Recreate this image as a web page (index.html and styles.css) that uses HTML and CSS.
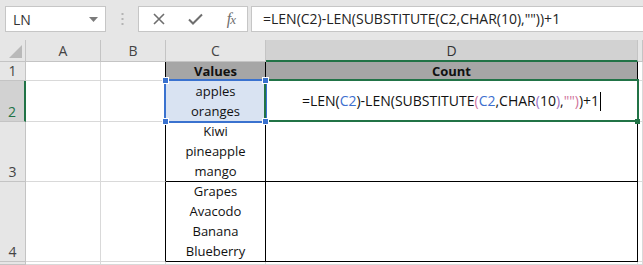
FILE: index.html
```html
<!DOCTYPE html>
<html lang="en">
<head>
    <meta charset="UTF-8">
    <title>LEN formula - count lines</title>
    <link rel="stylesheet" href="styles.css">
</head>
<body>
<div class="app">
    <div class="fbar">
        <div class="namebox">
            <span>LN</span>
            <svg class="drop" width="9" height="5" viewBox="0 0 9 5"><path d="M0 0h9L4.5 5z" fill="#7b7b7b"/></svg>
        </div>
        <svg class="grip" width="3" height="12" viewBox="0 0 3 12">
            <rect x="0.5" y="0" width="2" height="2" fill="#b4b4b4"/>
            <rect x="0.5" y="5" width="2" height="2" fill="#b4b4b4"/>
            <rect x="0.5" y="10" width="2" height="2" fill="#b4b4b4"/>
        </svg>
        <div class="btns">
            <svg width="12" height="12" viewBox="0 0 12 12"><path d="M1 1l10 10M11 1L1 11" stroke="#6e6e6e" stroke-width="1.6"/></svg>
            <svg width="15" height="12" viewBox="0 0 15 12"><path d="M1 6.5l4 4L14 1.5" stroke="#6e6e6e" stroke-width="2" fill="none"/></svg>
            <span class="fx">f<i>x</i></span>
        </div>
        <div class="formula">=LEN(C2)-LEN(SUBSTITUTE(C2,CHAR(10),""))+1</div>
    </div>

    <div class="sheet">
        <div class="corner"><svg width="13" height="13" viewBox="0 0 13 13"><path d="M13 0v13H0z" fill="#b9b9b9"/></svg></div>
        <div class="colhead">A</div>
        <div class="colhead">B</div>
        <div class="colhead">C</div>
        <div class="colhead active">D</div>
        <div class="colhead end"></div>

        <div class="rowhead">1</div>
        <div class="cell"></div>
        <div class="cell edge"></div>
        <div class="cell tbl title">Values</div>
        <div class="cell tbl title">Count</div>
        <div class="cell"></div>

        <div class="rowhead active">2</div>
        <div class="cell"></div>
        <div class="cell edge"></div>
        <div class="cell tbl val ref">
            <span>apples</span><span>oranges</span>
            <i class="h tl"></i><i class="h tr"></i><i class="h bl"></i><i class="h br"></i>
        </div>
        <div class="cell tbl edit">
            <div class="ftext">=LEN(<b class="r">C2</b>)-LEN(SUBSTITUTE<b class="p1">(</b><b class="r">C2</b>,CHAR<b class="p2">(</b>10<b class="p2">)</b>,<b class="p1">""</b><b class="p1">)</b>)+1<span class="caret"></span></div>
            <i class="gh"></i>
        </div>
        <div class="cell"></div>

        <div class="rowhead">3</div>
        <div class="cell"></div>
        <div class="cell edge"></div>
        <div class="cell tbl val"><span>Kiwi</span><span>pineapple</span><span>mango</span></div>
        <div class="cell tbl"></div>
        <div class="cell"></div>

        <div class="rowhead">4</div>
        <div class="cell"></div>
        <div class="cell edge"></div>
        <div class="cell tbl val"><span>Grapes</span><span>Avacodo</span><span>Banana</span><span>Blueberry</span></div>
        <div class="cell tbl"></div>
        <div class="cell"></div>

        <div class="rowhead"></div>
        <div class="cell"></div>
        <div class="cell"></div>
        <div class="cell"></div>
        <div class="cell"></div>
        <div class="cell"></div>
    </div>
</div>
</body>
</html>
```
FILE: styles.css
```css
:root {
    --bar-bg: #e6e6e6;
    --head-bg: #e6e6e6;
    --head-sel: #d2d2d2;
    --head-line: #c4c4c4;
    --grid: #d9d9d9;
    --green: #217346;
    --ref-blue: #3a72cf;
}

body {
    margin: 0;
    background: #ffffff;
    font-family: 'Open Sans', sans-serif;
}

.app {
    width: 643px;
    height: 265px;
    overflow: hidden;
}

/* -- formula bar -- */
.fbar {
    height: 40px;
    background: var(--bar-bg);
    display: flex;
    align-items: flex-start;
    padding-top: 6px;
    box-sizing: border-box;
}

.namebox {
    margin-left: 5px;
    width: 101px;
    height: 26px;
    box-sizing: border-box;
    background: #fff;
    border: 1px solid #c6c6c6;
    display: flex;
    align-items: center;
    justify-content: space-between;
    padding: 0 7px 0 7px;
    font-size: 14px;
    color: #333;
}

.grip {
    margin: 7px 14px 0 15px;
}

.btns {
    width: 110px;
    height: 26px;
    box-sizing: border-box;
    background: #fff;
    border: 1px solid #c6c6c6;
    display: flex;
    align-items: center;
    justify-content: space-between;
    padding: 0 12px 0 14px;
}

.fx {
    font-family: 'Liberation Serif', serif;
    font-style: italic;
    font-size: 16px;
    color: #6e6e6e;
    letter-spacing: -1px;
}

.fx i {
    font-size: 13px;
}

.formula {
    flex: 1;
    margin-left: 3px;
    height: 26px;
    box-sizing: border-box;
    background: #fff;
    border: 1px solid #c6c6c6;
    border-right: none;
    padding-left: 11px;
    font-size: 14px;
    line-height: 24px;
    color: #222;
    white-space: nowrap;
}

/* -- sheet grid -- */
.sheet {
    display: grid;
    grid-template-columns: 26px 75px 65px 100px 372px 1fr;
    grid-template-rows: 22px 19px 41px 60px 80px 1fr;
    height: 225px;
    font-size: 13px;
    color: #111;
}

.sheet > div {
    box-sizing: border-box;
    border-right: 1px solid var(--grid);
    border-bottom: 1px solid var(--grid);
}

.corner {
    background: var(--head-bg);
    display: flex;
    align-items: flex-end;
    justify-content: flex-end;
    padding: 0 3px 3px 0;
}

.sheet > .corner,
.sheet > .colhead,
.sheet > .rowhead {
    border-color: var(--head-line);
}

.colhead {
    background: var(--head-bg);
    text-align: center;
    font-size: 14px;
    line-height: 21px;
    color: #444;
}

.sheet > .colhead.active {
    background: var(--head-sel);
    border-bottom: 2px solid var(--green);
    color: #333;
}

.colhead.end {
    background: var(--head-bg);
}

.rowhead {
    background: var(--head-bg);
    font-size: 14px;
    color: #444;
    display: flex;
    align-items: flex-end;
    justify-content: center;
    line-height: 19px;
}

.sheet > .rowhead.active {
    background: var(--head-sel);
    border-right: 2px solid var(--green);
    color: var(--green);
}

.sheet > .edge {
    border-right-color: #000;
}

.sheet > .tbl {
    border-right-color: #000;
    border-bottom-color: #000;
}

.title {
    background: #a6a6a6;
    font-weight: 700;
    text-align: center;
    line-height: 18px;
}

.val {
    display: flex;
    flex-direction: column;
    justify-content: flex-end;
    align-items: center;
    line-height: 20px;
}

/* referenced cell C2 */
.ref {
    position: relative;
    background: #d9e3f2;
}

.ref::after {
    content: "";
    position: absolute;
    top: -2px;
    left: -2px;
    right: -2px;
    bottom: -2px;
    border: 2px solid var(--ref-blue);
}

.h {
    position: absolute;
    width: 5px;
    height: 5px;
    background: var(--ref-blue);
    border: 1px solid #fff;
    z-index: 2;
}

.h.tl { top: -4px; left: -4px; }
.h.tr { top: -4px; right: -4px; }
.h.bl { bottom: -4px; left: -4px; }
.h.br { bottom: -4px; right: -4px; }

/* active cell D2 in edit mode */
.edit {
    position: relative;
    display: flex;
    align-items: center;
    justify-content: center;
}

.edit::after {
    content: "";
    position: absolute;
    top: -2px;
    left: -2px;
    right: -2px;
    bottom: -1px;
    border: 2px solid var(--green);
}

.ftext {
    font-size: 14px;
    color: #111;
    white-space: nowrap;
}

.ftext b {
    font-weight: 400;
}

.ftext .r { color: #3d6fcf; }
.ftext .p1 { color: #d0739c; }
.ftext .p2 { color: #9a6fc2; }

.caret {
    display: inline-block;
    width: 1px;
    height: 19px;
    background: #000;
    margin-left: 1px;
    vertical-align: -5px;
}

.gh {
    position: absolute;
    right: -3px;
    bottom: -3px;
    width: 5px;
    height: 5px;
    background: var(--green);
    z-index: 2;
}
```
